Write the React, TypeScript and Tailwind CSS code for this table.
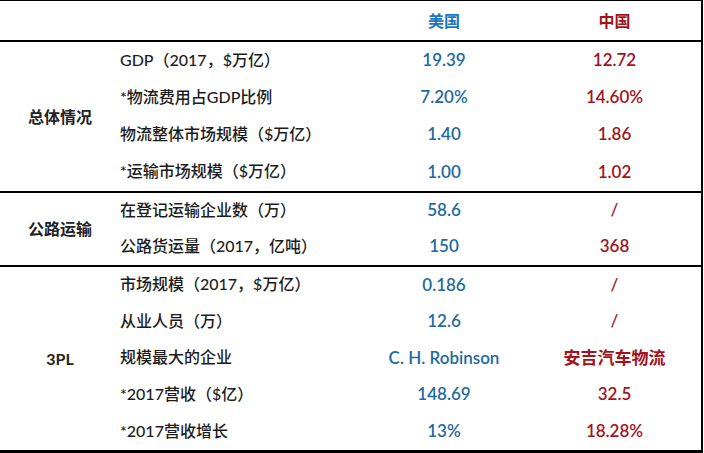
const FONT = "font-['Lato','Noto_Sans_CJK_SC',sans-serif]";

type Row = { label: string; us: string; cn: string };
type Section = { name: string; height: string; rows: Row[] };

const sections: Section[] = [
  {
    name: "总体情况",
    height: "h-[151px]",
    rows: [
      { label: "GDP（2017，$万亿）", us: "19.39", cn: "12.72" },
      { label: "*物流费用占GDP比例", us: "7.20%", cn: "14.60%" },
      { label: "物流整体市场规模（$万亿）", us: "1.40", cn: "1.86" },
      { label: "*运输市场规模（$万亿）", us: "1.00", cn: "1.02" },
    ],
  },
  {
    name: "公路运输",
    height: "h-[74px]",
    rows: [
      { label: "在登记运输企业数（万）", us: "58.6", cn: "/" },
      { label: "公路货运量（2017，亿吨）", us: "150", cn: "368" },
    ],
  },
  {
    name: "3PL",
    height: "h-[186px]",
    rows: [
      { label: "市场规模（2017，$万亿）", us: "0.186", cn: "/" },
      { label: "从业人员（万）", us: "12.6", cn: "/" },
      { label: "规模最大的企业", us: "C. H. Robinson", cn: "安吉汽车物流" },
      { label: "*2017营收（$亿）", us: "148.69", cn: "32.5" },
      { label: "*2017营收增长", us: "13%", cn: "18.28%" },
    ],
  },
];

export default function App() {
  return (
    <div className={`w-[704px] h-[453px] bg-white ${FONT} text-[#222]`}>
      <div className="w-[703px] border-r-2 border-black">
        {/* header */}
        <div className="flex h-[42px] border-t border-b-2 border-black">
          <div className="w-[360px]" />
          <div className="w-[168px] flex items-center justify-center text-[16px] font-bold text-[#1b75bc]">
            美国
          </div>
          <div className="flex-1 flex items-center justify-center text-[16px] font-bold text-[#a3131c]">
            中国
          </div>
        </div>

        {sections.map((s, i) => (
          <div
            key={s.name}
            className={`flex ${s.height} border-black ${i === sections.length - 1 ? "border-b-[3px]" : "border-b-2"}`}
          >
            <div className="w-[120px] flex items-center justify-center text-[16px] font-bold text-[#222]">
              {s.name}
            </div>
            <div className="flex-1 flex flex-col">
              {s.rows.map((r) => (
                <div key={r.label} className="flex-1 flex items-center pb-[2px]">
                  <div className="w-[240px] text-[16px] font-medium text-[#1c1c1c]">{r.label}</div>
                  <div className="w-[168px] text-center text-[17px] font-semibold text-[#1f6a9f]">{r.us}</div>
                  <div className="flex-1 text-center text-[17px] font-semibold text-[#a3131c]">{r.cn}</div>
                </div>
              ))}
            </div>
          </div>
        ))}
      </div>
    </div>
  );
}
